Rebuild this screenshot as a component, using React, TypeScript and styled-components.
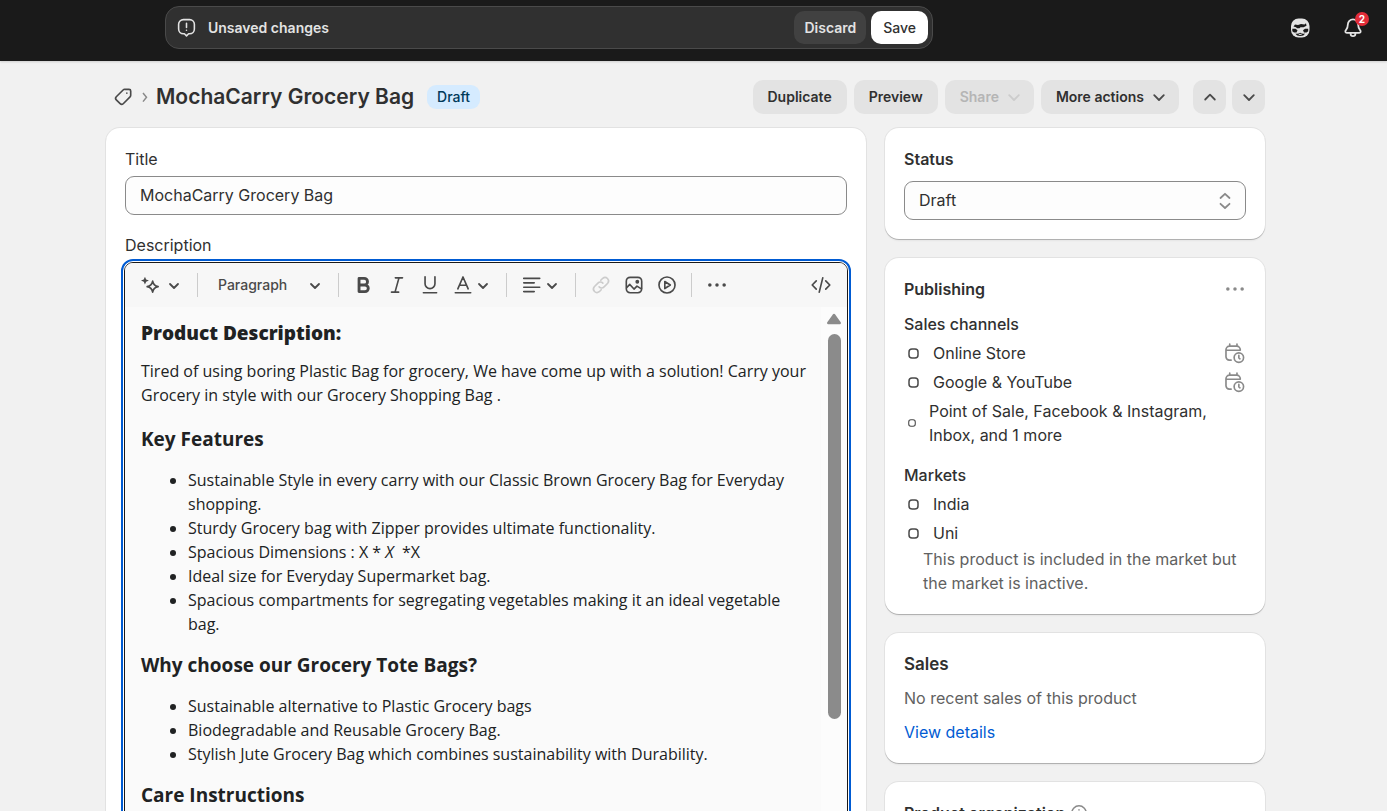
import React from "react";
import styled, { createGlobalStyle, css } from "styled-components";

const Global = createGlobalStyle`
  * { box-sizing: border-box; }
  html, body { margin: 0; }
  body { background: #f1f1f1; color: #303030; font-family: Inter, "Liberation Sans", sans-serif; font-size: 16px; line-height: 24px; }
  button, input, select { font: inherit; color: inherit; margin: 0; }
  h1, h2, h3, p, ul { margin: 0; padding: 0; }
`;

const Shell = styled.div`height: 100vh; overflow: hidden;`;
const TopBar = styled.header`
  height: 61px; background: #1a1a1a; display: flex; align-items: flex-start; justify-content: space-between;
  padding: 6px 22px 0 165px; box-shadow: 0 1px 2px rgba(0,0,0,.15);
`;
const SaveBar = styled.div`
  flex: 0 1 768px; height: 43px; border: 1px solid #4a4a4a; border-radius: 14px; background: #303030; color: #e3e3e3;
  display: flex; align-items: center; gap: 5px; padding: 0 4px 0 10px; font-size: 14px; font-weight: 600;
`;
const SaveLabel = styled.span`flex: 1; padding-left: 6px;`;
const BarButton = styled.button<{ $primary?: boolean }>`
  height: 33px; padding: 0 ${p => (p.$primary ? 12 : 10)}px; border: 0; border-radius: 10px; font-weight: ${p => (p.$primary ? 500 : 600)};
  background: ${p => (p.$primary ? "#fff" : "#414141")}; color: ${p => (p.$primary ? "#303030" : "#e3e3e3")};
`;
const TopIcons = styled.div`display: flex; align-items: center; gap: 27px; height: 43px; color: #e3e3e3;`;
const IconButton = styled.button<{ $gap?: number }>`
  display: inline-flex; align-items: center; justify-content: center; gap: ${p => p.$gap ?? 3}px; padding: 0; border: 0; background: none; color: inherit; position: relative;
  &:disabled { color: #cccccc; }
`;
const Count = styled.span`
  position: absolute; top: -4px; right: -4px; width: 14px; height: 14px; border-radius: 7px; background: #e22c38; color: #fff;
  font-size: 10px; line-height: 14px; font-weight: 700; text-align: center;
`;

const Page = styled.main`max-width: 1175px; margin: 0 auto; padding: 0 16px 0 0;`;
const PageHeader = styled.div`display: flex; align-items: center; padding: 19px 0 14px 6px; color: #4a4a4a;`;
const Heading = styled.h1`font-size: 21px; line-height: 32px; font-weight: 600; color: #303030; margin: 0 13px 0 2px;`;
const Badge = styled.span`background: #d5ebff; color: #003a5a; border-radius: 9px; padding: 0 10px; font-size: 14px; font-weight: 500; line-height: 24px;`;
const Actions = styled.div`margin-left: auto; display: flex; gap: 7px;`;
const Action = styled.button<{ $square?: boolean }>`
  height: 34px; border: 0; border-radius: 10px; background: #e3e3e3; font-size: 14px; font-weight: 600; color: #303030;
  display: flex; align-items: center; justify-content: center; gap: 5px; padding: 0 15px;
  svg { margin-right: -5px; color: #4a4a4a; }
  ${p => p.$square && css`width: 33px; padding: 0; svg { margin: 0; }`}
  &:disabled { color: #b5b5b5; }
  &:disabled svg { color: #cccccc; }
`;
const Pager = styled.div`display: flex; gap: 6px; margin-left: 7px;`;

const Columns = styled.div`display: grid; grid-template-columns: minmax(0, 2fr) minmax(0, 1fr); gap: 19px; align-items: start;`;
const Side = styled.div`display: flex; flex-direction: column; gap: 19px;`;
const Card = styled.section`
  background: #fff; border-radius: 14px; padding: 19px;
  box-shadow: 0 1px 0 rgba(26,26,26,.2), 0 0 0 1px rgba(0,0,0,.06), 0 3px 2px -1px rgba(26,26,26,.05);
`;
const Label = styled.label`display: block; line-height: 24px; margin-bottom: 5px;`;
const field = css`
  display: block; width: 100%; height: 39px; border: 1px solid #8a8a8a; border-radius: 9px; background: #fdfdfd; padding: 0 14px 2px;
`;
const TextInput = styled.input`${field} margin-bottom: 18px;`;

const Editor = styled.div`
  margin: 0 -1px; border: 1px solid #1a1a1a; border-radius: 9px; outline: 2px solid #005bd3; outline-offset: 1px; background: #fafafa; overflow: hidden;
`;
const Toolbar = styled.div`
  background: #f7f7f7; height: 44px; display: flex; align-items: center; color: #4a4a4a; padding: 0 15px;
`;
const ToolGroup = styled.div`display: flex; align-items: center; gap: 11px;`;
const Divider = styled.span`width: 1px; height: 24px; background: #cccccc; margin: 0 14px 0 13px;`;
const ParagraphButton = styled(IconButton)`width: 107px; justify-content: space-between; font-size: 14px; margin-left: 6px; font-weight: 500;`;
const Push = styled.span`flex: 1;`;

const EditorBody = styled.div`display: flex; min-height: 640px;`;
const Doc = styled.div`
  flex: 1; padding: 14px 12px 0 16px; font-family: "Open Sans", "Noto Sans", sans-serif; line-height: 24px; color: #202223;
  p { margin: 14px 0 20px; }
  ul { margin: 17px 0; padding-left: 47px; }
`;
const DocHeading = styled.h3<{ $heavy?: boolean }>`font-size: 19px; line-height: 24px; font-weight: ${p => (p.$heavy ? 800 : 700)};`;
const Scroll = styled.div`width: 26px; background: #fcfcfc; padding: 6px; display: flex; flex-direction: column; align-items: center; gap: 9px;`;
const Thumb = styled.div`width: 13px; height: 385px; border-radius: 7px; background: #8b8b8b;`;

const CardTitle = styled.h2<{ $large?: boolean }>`display: block; font-size: ${p => (p.$large ? 17 : 16)}px; line-height: 24px; font-weight: 600;`;
const SubTitle = styled.h3`font-size: 16px; line-height: 24px; font-weight: 500;`;
const TitleRow = styled.div`display: flex; justify-content: space-between; align-items: center; margin-bottom: 11px;`;
const SelectWrap = styled.div`position: relative; margin-top: 10px; svg { position: absolute; right: 11px; top: 10px; pointer-events: none; }`;
const Select = styled.select`${field} appearance: none;`;
const List = styled.ul<{ $last?: boolean }>`
  list-style: none; display: flex; flex-direction: column; gap: 5px; margin-top: 5px; margin-bottom: ${p => (p.$last ? 2 : 16)}px;
`;
const Item = styled.li<{ $small?: boolean }>`
  display: flex; align-items: center; line-height: 24px; gap: ${p => (p.$small ? 13 : 14)}px; padding-left: 4px;
  > svg { flex: none; }
  > svg:not(:first-child) { margin-left: auto; }
`;
const Muted = styled.p<{ $indent?: boolean }>`color: #616161; line-height: 24px; padding-left: ${p => (p.$indent ? 19 : 0)}px;`;
const Link = styled.a`color: #005bd3; text-decoration: none; line-height: 24px;`;
const Stack = styled.div`display: flex; flex-direction: column; align-items: flex-start; gap: 10px;`;
const InfoTitle = styled.div`display: flex; align-items: center; gap: 4px;`;

type IconProps = { children: React.ReactNode; size?: number; w?: number; color?: string };
const Svg = ({ children, size = 22, w = 1.5, color = "currentColor" }: IconProps) => (
  <svg width={size} height={size} viewBox="0 0 20 20" fill="none" stroke={color} strokeWidth={w} strokeLinecap="round" strokeLinejoin="round" aria-hidden="true">{children}</svg>
);
const Chevron = ({ up = false }: { up?: boolean }) => (
  <Svg size={20} w={1.8}>{up ? <path d="M5.200 12.500 10 7.700l4.800 4.800" /> : <path d="M5.200 8.200 10 13l4.800-4.800" />}</Svg>
);
const SmallChevron = () => (
  <svg width="16" height="24" viewBox="0 0 16 24" fill="none" stroke="currentColor" strokeWidth="1.800" strokeLinecap="round" strokeLinejoin="round" aria-hidden="true"><path d="M2 11l4 4 4-4" /></svg>
);
const Dots = ({ color }: { color?: string }) => (
  <Svg color={color}><g fill={color ?? "currentColor"} stroke="none"><circle cx="3.500" cy="10" r="1.600" /><circle cx="10" cy="10" r="1.600" /><circle cx="16.500" cy="10" r="1.600" /></g></Svg>
);
const Bullet = ({ small = false }: { small?: boolean }) => (
  <svg width={small ? 8 : 11} height={small ? 8 : 11} viewBox="0 0 11 11" fill="none" stroke="#4a4a4a" strokeWidth="1.500" aria-hidden="true"><rect x="1" y="1" width="9" height="9" rx="3" /></svg>
);
const CalendarClock = () => (
  <Svg color="#8a8a8a"><path d="M5.200 1.800v2M11.800 1.800v2M2.200 7.500h12.600V7a3.200 3.200 0 0 0-3.200-3.200H5A3.200 3.200 0 0 0 1.800 7v6.500a3 3 0 0 0 3 3h1.700" /><circle cx="13.500" cy="14.200" r="4.300" /><path d="M13.500 12.200v2.300l1 .8" /></Svg>
);

export default function App() {
  return (
    <Shell>
      <Global />
      <TopBar>
        <SaveBar>
          <Svg size={21}><path d="M7 2.500h6a4.500 4.500 0 0 1 4.500 4.500v4.500a4.500 4.500 0 0 1-4.500 4.500h-1L10 18l-2-2H7a4.500 4.500 0 0 1-4.500-4.500V7A4.500 4.500 0 0 1 7 2.500zM10 6v4M10 12.600v.1" /></Svg>
          <SaveLabel>Unsaved changes</SaveLabel>
          <BarButton>Discard</BarButton>
          <BarButton $primary>Save</BarButton>
        </SaveBar>
        <TopIcons>
          <IconButton aria-label="Account">
            <svg width="28" height="24" viewBox="0 0 28 24" aria-hidden="true">
              <rect x="5" y="2.500" width="18.500" height="19" rx="7.500" fill="#e3e3e3" />
              <path d="M7.500 10.500l1.500-2 3 .5 3-1 3.500.500 1.500-1.200.5 2.500-3 1.500h-3l-1 1h-2.500l-1-1z" fill="#1a1a1a" />
              <path d="M6.300 12.800h3.200l2 1.400-1 2.200H8l-1.700-1.200zM22.200 12.800H19l-2 1.400 1 2.200h2.500l1.700-1.200z" fill="#1a1a1a" />
              <path d="M9.500 17.500q2.500.8 4.700-.8 2.200 1.600 4.800.8-1 2.500-4.800 2.500t-4.700-2.500z" fill="#1a1a1a" />
              <path d="M12.800 18.400h2.800" stroke="#e3e3e3" strokeWidth="1" />
            </svg>
          </IconButton>
          <IconButton aria-label="Notifications">
            <Svg size={24}><path d="M10 2.800a4.300 4.300 0 0 0-4.300 4.300c0 2.700-.6 3.600-1.600 4.700-.9 1-.5 2.200.7 2.200h10.400c1.200 0 1.600-1.200.7-2.200-1-1.100-1.600-2-1.600-4.700A4.300 4.300 0 0 0 10 2.800zM8 14.400v.4a2 2 0 0 0 4 0v-.4" /></Svg>
            <Count>2</Count>
          </IconButton>
        </TopIcons>
      </TopBar>
      <Page>
        <PageHeader>
          <Svg size={22}><path d="M11.500 3h4A1.500 1.500 0 0 1 17 4.500v4a2 2 0 0 1-.6 1.400l-6.200 6.200a2 2 0 0 1-2.800 0l-3.500-3.500a2 2 0 0 1 0-2.800l6.200-6.200A2 2 0 0 1 11.500 3zM13.500 6.500v.1" /></Svg>
          <svg width="20" height="20" viewBox="0 0 20 20" fill="none" stroke="#8a8a8a" strokeWidth="1.500" aria-hidden="true"><path d="m9 6 3.500 4.300L9 14.600" /></svg>
          <Heading>MochaCarry Grocery Bag</Heading>
          <Badge>Draft</Badge>
          <Actions>
            <Action>Duplicate</Action>
            <Action>Preview</Action>
            <Action disabled>Share<Chevron /></Action>
            <Action>More actions<Chevron /></Action>
            <Pager>
              <Action $square aria-label="Previous"><Chevron up /></Action>
              <Action $square aria-label="Next"><Chevron /></Action>
            </Pager>
          </Actions>
        </PageHeader>
        <Columns>
          <Card>
            <Label htmlFor="title">Title</Label>
            <TextInput id="title" defaultValue="MochaCarry Grocery Bag" />
            <Label as="div">Description</Label>
            <Editor>
              <Toolbar>
                <IconButton $gap={6} aria-label="Generate text"><Svg><path d="M11.500 6.500q.8 4.200 5 5q-4.200.8-5 5q-.8-4.200-5-5q4.200-.8 5-5z" /><path d="M4.500 2.500 5.600 5l2.500 1-2.500 1-1.100 2.500L3.400 7 .9 6l2.500-1z" fill="currentColor" stroke="none" /></Svg><SmallChevron /></IconButton>
                <Divider />
                <ParagraphButton>Paragraph<SmallChevron /></ParagraphButton>
                <Divider />
                <ToolGroup>
                  <IconButton aria-label="Bold"><Svg w={2.600}><path d="M5.500 4h4.700a3 3 0 0 1 0 6H5.500zM5.500 10h5.400a3 3 0 0 1 0 6H5.500z" /></Svg></IconButton>
                  <IconButton aria-label="Italic"><Svg><path d="M8.500 3.500H15M5 16.500h6.500M11.800 3.500 8.200 16.500" /></Svg></IconButton>
                  <IconButton aria-label="Underline"><Svg><path d="M5.500 2.500v6.300a4.500 4.500 0 0 0 9 0V2.500M4 17h12" /></Svg></IconButton>
                  <IconButton aria-label="Text color"><Svg><path d="M5.300 13.500 10 2.700l4.700 10.800M6.800 10.200h6.400M3 17h14" /></Svg><SmallChevron /></IconButton>
                </ToolGroup>
                <Divider />
                <IconButton aria-label="Alignment"><Svg><path d="M2.500 4h14.500M2.500 8h9.500M2.500 12h14.500M2.500 16h9.500" /></Svg><SmallChevron /></IconButton>
                <Divider />
                <ToolGroup>
                  <IconButton aria-label="Link" disabled><Svg><path d="M8.300 11.700a3.200 3.200 0 0 0 4.500 0l3.300-3.300a3.200 3.200 0 0 0-4.500-4.500L9.800 5.700M11.700 8.300a3.200 3.200 0 0 0-4.500 0l-3.300 3.300a3.200 3.200 0 0 0 4.500 4.500l1.800-1.800" /></Svg></IconButton>
                  <IconButton aria-label="Image"><Svg><rect x="3" y="3" width="14" height="14" rx="3.500" /><path d="m3.500 12.200 2.700-2.700 3.800 4.200 2.700-2.700 4 2.500" /><circle cx="13" cy="7" r="1" fill="currentColor" /></Svg></IconButton>
                  <IconButton aria-label="Video"><Svg><circle cx="10" cy="10" r="7.300" /><path d="m8 6.800 5 3.200-5 3.200z" /></Svg></IconButton>
                </ToolGroup>
                <Divider />
                <IconButton aria-label="More"><Dots /></IconButton>
                <Push />
                <IconButton aria-label="Show HTML"><Svg><path d="M5.700 6.200 2 10l3.700 3.800M14.300 6.200 18 10l-3.700 3.800M11.600 3.500 8.400 16.500" /></Svg></IconButton>
              </Toolbar>
              <EditorBody>
                <Doc>
                  <DocHeading $heavy>Product Description:</DocHeading>
                  <p>Tired of using boring Plastic Bag for grocery, We have come up with a solution! Carry your Grocery in style with our Grocery Shopping Bag .</p>
                  <DocHeading>Key Features</DocHeading>
                  <ul>
                    <li>Sustainable Style in every carry with our Classic Brown Grocery Bag for Everyday shopping.</li>
                    <li>Sturdy Grocery bag with Zipper provides ultimate functionality.</li>
                    <li>Spacious Dimensions : X * <i>X</i>&nbsp; *X</li>
                    <li>Ideal size for Everyday Supermarket bag.</li>
                    <li>Spacious compartments for segregating vegetables making it an ideal vegetable bag.</li>
                  </ul>
                  <DocHeading>Why choose our Grocery Tote Bags?</DocHeading>
                  <ul>
                    <li>Sustainable alternative to Plastic Grocery bags</li>
                    <li>Biodegradable and Reusable Grocery Bag.</li>
                    <li>Stylish Jute Grocery Bag which combines sustainability with Durability.</li>
                  </ul>
                  <DocHeading>Care Instructions</DocHeading>
                </Doc>
                <Scroll>
                  <svg width="16" height="12" viewBox="0 0 16 12" aria-hidden="true"><path d="M8 2 13.700 10H2.300z" fill="#8b8b8b" stroke="#8b8b8b" strokeWidth="2.500" strokeLinejoin="round" /></svg>
                  <Thumb />
                </Scroll>
              </EditorBody>
            </Editor>
          </Card>
          <Side>
            <Card>
              <CardTitle as="label" htmlFor="status">Status</CardTitle>
              <SelectWrap>
                <Select id="status"><option>Draft</option></Select>
                <Svg size={20} color="#8a8a8a" w={1.8}><path d="M5.500 7 10 2.800 14.500 7M5.500 12.800l4.500 4.200 4.500-4.200" /></Svg>
              </SelectWrap>
            </Card>
            <Card>
              <TitleRow><CardTitle>Publishing</CardTitle><IconButton aria-label="Publishing options"><Dots color="#8a8a8a" /></IconButton></TitleRow>
              <SubTitle>Sales channels</SubTitle>
              <List>
                <Item><Bullet />Online Store<CalendarClock /></Item>
                <Item><Bullet />Google &amp; YouTube<CalendarClock /></Item>
                <Item $small><Bullet small />Point of Sale, Facebook &amp; Instagram, Inbox, and 1 more</Item>
              </List>
              <SubTitle>Markets</SubTitle>
              <List $last>
                <Item><Bullet />India</Item>
                <Item><Bullet />Uni</Item>
              </List>
              <Muted $indent>This product is included in the market but the market is inactive.</Muted>
            </Card>
            <Card>
              <Stack>
                <CardTitle $large>Sales</CardTitle>
                <Muted>No recent sales of this product</Muted>
                <Link href="#">View details</Link>
              </Stack>
            </Card>
            <Card>
              <InfoTitle>
                <CardTitle>Product organization</CardTitle>
                <Svg size={20} color="#8a8a8a"><circle cx="10" cy="10" r="7.200" /><path d="M10 9.500v4M10 6.800v.1" /></Svg>
              </InfoTitle>
            </Card>
          </Side>
        </Columns>
      </Page>
    </Shell>
  );
}
